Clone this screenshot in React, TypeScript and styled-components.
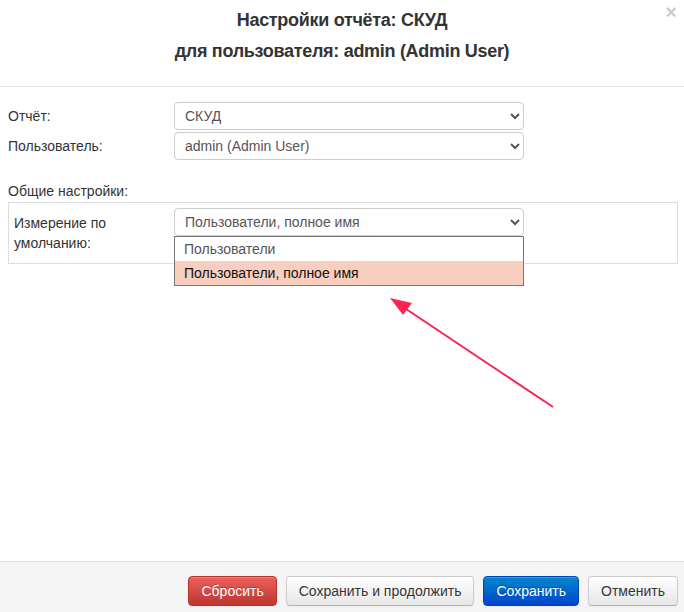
import styled, { createGlobalStyle } from "styled-components";

const GlobalStyle = createGlobalStyle`
  html, body {
    margin: 0;
    padding: 0;
    background: #fff;
  }
  body {
    font-family: "Liberation Sans", Arial, sans-serif;
    font-size: 14px;
    color: #333;
  }
`;

const Modal = styled.div`
  position: relative;
  display: flex;
  flex-direction: column;
  width: 684px;
  height: 612px;
  background: #fff;
  overflow: hidden;
`;

const Header = styled.div`
  position: relative;
  height: 87px;
  border-bottom: 1px solid #e5e5e5;
  box-sizing: border-box;
  padding-top: 5px;
`;

const Title = styled.h3`
  margin: 0;
  font-family: "Liberation Sans", Arial, sans-serif;
  font-size: 18px;
  font-weight: bold;
  letter-spacing: -0.3px;
  line-height: 31px;
  text-align: center;
  color: #333;
`;

const Close = styled.span`
  position: absolute;
  top: 2px;
  right: 7px;
  font-size: 20px;
  font-weight: bold;
  line-height: 20px;
  color: #000;
  opacity: 0.2;
`;

const Body = styled.div`
  position: relative;
  flex: 1;
  padding: 15px 6px 0 8px;
`;

const Row = styled.div<{ $labelWidth: number }>`
  display: grid;
  grid-template-columns: ${(p) => p.$labelWidth}px 350px;
  align-items: center;
  margin-bottom: 2px;
`;

const Label = styled.label`
  line-height: 20px;
  color: #333;
`;

const WrapLabel = styled(Label)`
  align-self: start;
  padding-top: 5px;
  padding-right: 20px;
`;

const SelectWrap = styled.div`
  position: relative;
  align-self: start;
`;

const Select = styled.select`
  display: block;
  width: 350px;
  height: 28px;
  padding: 0 6px;
  font-family: "Liberation Sans", Arial, sans-serif;
  font-size: 14px;
  color: #555;
  background: #fff;
  border: 1px solid #ccc;
  border-radius: 4px;
  box-sizing: border-box;
  outline: none;
`;

const SectionTitle = styled.div`
  margin-top: 21px;
  line-height: 20px;
  height: 20px;
`;

const Fieldset = styled.div`
  margin-top: 1px;
  border: 1px solid #ddd;
  padding: 5px 5px 8px;
`;

const OptionList = styled.div`
  position: absolute;
  top: 28px;
  left: 0;
  z-index: 2;
  width: 350px;
  box-sizing: border-box;
  border: 1px solid #767676;
  background: #fff;
`;

const Option = styled.div<{ $active?: boolean }>`
  height: 24px;
  line-height: 24px;
  padding-left: 9px;
  color: ${(p) => (p.$active ? "#111" : "#555")};
  background: ${(p) => (p.$active ? "#f8cebf" : "#fff")};
`;

const Pointer = styled.svg`
  position: absolute;
  left: 0;
  top: 0;
  pointer-events: none;
`;

const Footer = styled.div`
  display: flex;
  justify-content: flex-end;
  gap: 9px;
  height: 51px;
  box-sizing: border-box;
  padding: 14px 6px 0 0;
  background: #f5f5f5;
  border-top: 1px solid #ddd;
`;

const tones = {
  danger: { top: "#ee5f5b", bottom: "#bd362f", border: "#b3322c", text: "#fff" },
  primary: { top: "#0088cc", bottom: "#0044cc", border: "#0044bb", text: "#fff" },
  plain: { top: "#ffffff", bottom: "#e6e6e6", border: "#cccccc", text: "#333" },
};

const Button = styled.button<{ $tone: keyof typeof tones }>`
  height: 30px;
  padding: 0 12px;
  font-family: "Liberation Sans", Arial, sans-serif;
  font-size: 14px;
  line-height: 20px;
  color: ${(p) => tones[p.$tone].text};
  text-shadow: ${(p) =>
    p.$tone === "plain" ? "0 1px 1px rgba(255,255,255,.75)" : "0 -1px 0 rgba(0,0,0,.25)"};
  background: linear-gradient(
    to bottom,
    ${(p) => tones[p.$tone].top},
    ${(p) => tones[p.$tone].bottom}
  );
  border: 1px solid ${(p) => tones[p.$tone].border};
  border-bottom-color: ${(p) => (p.$tone === "plain" ? "#b3b3b3" : tones[p.$tone].border)};
  border-radius: 4px;
  box-shadow: inset 0 1px 0 rgba(255, 255, 255, 0.2), 0 1px 2px rgba(0, 0, 0, 0.05);
  cursor: pointer;
`;

export default function App() {
  return (
    <>
      <GlobalStyle />
      <Modal>
        <Header>
          <Title>Настройки отчёта: СКУД</Title>
          <Title>для пользователя: admin (Admin User)</Title>
          <Close>×</Close>
        </Header>
        <Body>
          <Row $labelWidth={166}>
            <Label>Отчёт:</Label>
            <Select defaultValue="skud">
              <option value="skud">СКУД</option>
            </Select>
          </Row>
          <Row $labelWidth={166}>
            <Label>Пользователь:</Label>
            <Select defaultValue="admin">
              <option value="admin">admin (Admin User)</option>
            </Select>
          </Row>
          <SectionTitle>Общие настройки:</SectionTitle>
          <Fieldset>
            <Row $labelWidth={160}>
              <WrapLabel>Измерение по умолчанию:</WrapLabel>
              <SelectWrap>
                <Select defaultValue="full">
                  <option value="users">Пользователи</option>
                  <option value="full">Пользователи, полное имя</option>
                </Select>
                <OptionList>
                  <Option>Пользователи</Option>
                  <Option $active>Пользователи, полное имя</Option>
                </OptionList>
              </SelectWrap>
            </Row>
          </Fieldset>
          <Pointer width="684" height="474" viewBox="0 87 684 474">
            <line x1="553" y1="407" x2="400" y2="305" stroke="#fb2454" strokeWidth="2" />
            <polygon points="390,298 412,303 403,315" fill="#fb2454" />
          </Pointer>
        </Body>
        <Footer>
          <Button $tone="danger">Сбросить</Button>
          <Button $tone="plain">Сохранить и продолжить</Button>
          <Button $tone="primary">Сохранить</Button>
          <Button $tone="plain">Отменить</Button>
        </Footer>
      </Modal>
    </>
  );
}
